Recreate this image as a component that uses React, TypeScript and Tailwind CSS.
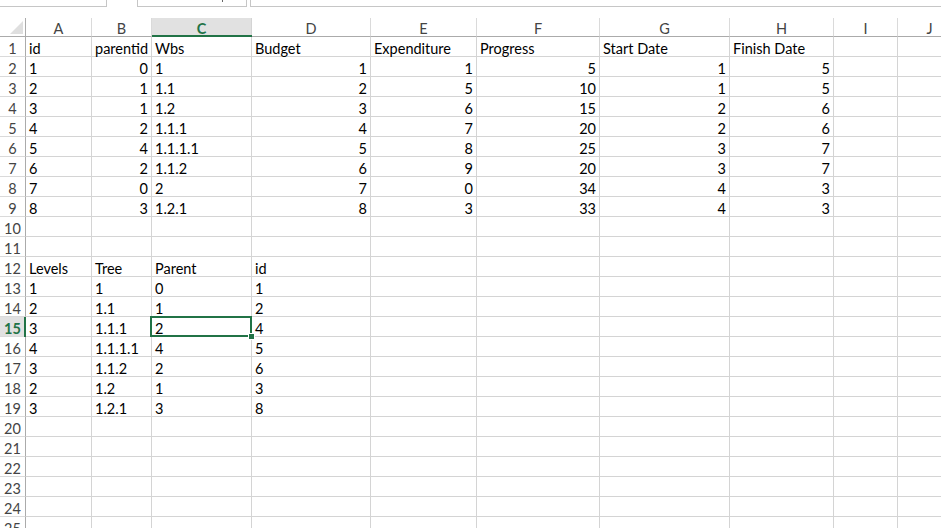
const COLS = ["A", "B", "C", "D", "E", "F", "G", "H", "I", "J"];

const TOP: string[][] = [
  ["id", "parentid", "Wbs", "Budget", "Expenditure", "Progress", "Start Date", "Finish Date"],
  ["1", "0", "1", "1", "1", "5", "1", "5"],
  ["2", "1", "1.1", "2", "5", "10", "1", "5"],
  ["3", "1", "1.2", "3", "6", "15", "2", "6"],
  ["4", "2", "1.1.1", "4", "7", "20", "2", "6"],
  ["5", "4", "1.1.1.1", "5", "8", "25", "3", "7"],
  ["6", "2", "1.1.2", "6", "9", "20", "3", "7"],
  ["7", "0", "2", "7", "0", "34", "4", "3"],
  ["8", "3", "1.2.1", "8", "3", "33", "4", "3"],
];

const TREE: string[][] = [
  ["Levels", "Tree", "Parent", "id"],
  ["1", "1", "0", "1"],
  ["2", "1.1", "1", "2"],
  ["3", "1.1.1", "2", "4"],
  ["4", "1.1.1.1", "4", "5"],
  ["3", "1.1.2", "2", "6"],
  ["2", "1.2", "1", "3"],
  ["3", "1.2.1", "3", "8"],
];

// numeric columns in the first table (B, D..H) are right aligned
const RIGHT_COLS = [1, 3, 4, 5, 6, 7];

function cellValue(row: number, col: number): { text: string; right: boolean } {
  if (row >= 1 && row <= 9) {
    const text = TOP[row - 1][col] ?? "";
    return { text, right: row > 1 && RIGHT_COLS.includes(col) };
  }
  if (row >= 12 && row <= 19) {
    return { text: TREE[row - 12][col] ?? "", right: false };
  }
  return { text: "", right: false };
}

export default function App() {
  const rows = Array.from({ length: 25 }, (_, i) => i + 1);

  return (
    <div className="w-[941px] h-[528px] overflow-hidden bg-white [font-family:Lato,'Liberation_Sans',sans-serif] text-[14.5px] text-black">
      {/* formula bar edge */}
      <div className="flex h-[7px]">
        <div className="w-[107px] border-r border-b border-[#c6c6c6]" />
        <div className="w-[30px]" />
        <div className="w-[110px] border-x border-b border-[#c6c6c6] relative">
          <span className="absolute left-[84px] top-0 w-[1px] h-[2px] bg-[#666]" />
        </div>
        <div className="w-[3px]" />
        <div className="flex-1 border-l border-b border-[#c6c6c6]" />
      </div>

      <div className="h-[11px]" />

      <div className="grid grid-cols-[26px_66px_60px_100px_119px_106px_123px_130px_104px_64px_64px] w-[962px]">
        {/* column headers */}
        <div className="relative h-[19px] border-r border-b border-[#ababab]">
          <svg className="absolute right-[2px] bottom-[2px]" width="13" height="13" viewBox="0 0 13 13">
            <polygon points="13,0 13,13 0,13" fill="#dfdfdf" />
          </svg>
        </div>
        {COLS.map((c) =>
          c === "C" ? (
            <div
              key={c}
              className="relative h-[19px] pt-[3px] bg-[#e1e1e1] border-r border-[#d4d4d4] flex items-center justify-center font-bold text-[#217346]"
            >
              {c}
              <span className="absolute left-0 right-[-1px] bottom-0 h-[2px] bg-[#217346]" />
            </div>
          ) : (
            <div
              key={c}
              className="h-[19px] pt-[3px] border-r border-b border-r-[#dadada] border-b-[#ababab] flex items-center justify-center text-[#444]"
            >
              {c}
            </div>
          )
        )}

        {rows.map((r) => (
          <RowCells key={r} row={r} />
        ))}
      </div>
    </div>
  );
}

function RowCells({ row }: { row: number }) {
  const selected = row === 15;
  return (
    <>
      <div
        className={`relative h-[20px] pt-[4px] border-r border-b border-r-[#ababab] border-b-[#dadada] flex items-center justify-center ${
          selected ? "bg-[#e1e1e1] text-[#217346] font-bold" : "text-[#444]"
        }`}
      >
        {row}
        {selected && <span className="absolute right-[-1px] top-0 bottom-[-1px] w-[2px] bg-[#217346]" />}
      </div>
      {COLS.map((c, ci) => {
        const { text, right } = cellValue(row, ci);
        const isSel = selected && ci === 2;
        return (
          <div
            key={c}
            className={`relative h-[20px] pt-[4px] border-r border-b border-[#d4d4d4] px-[3px] flex items-center whitespace-nowrap ${
              right ? "justify-end" : "justify-start"
            }`}
          >
            {text}
            {isSel && (
              <>
                <span className="absolute left-[-2px] top-[-1px] right-[-1px] bottom-[-1px] border-2 border-[#217346] z-10" />
                <span className="absolute right-[-4px] bottom-[-4px] w-[7px] h-[7px] bg-[#217346] border border-white z-20" />
              </>
            )}
          </div>
        );
      })}
    </>
  );
}
